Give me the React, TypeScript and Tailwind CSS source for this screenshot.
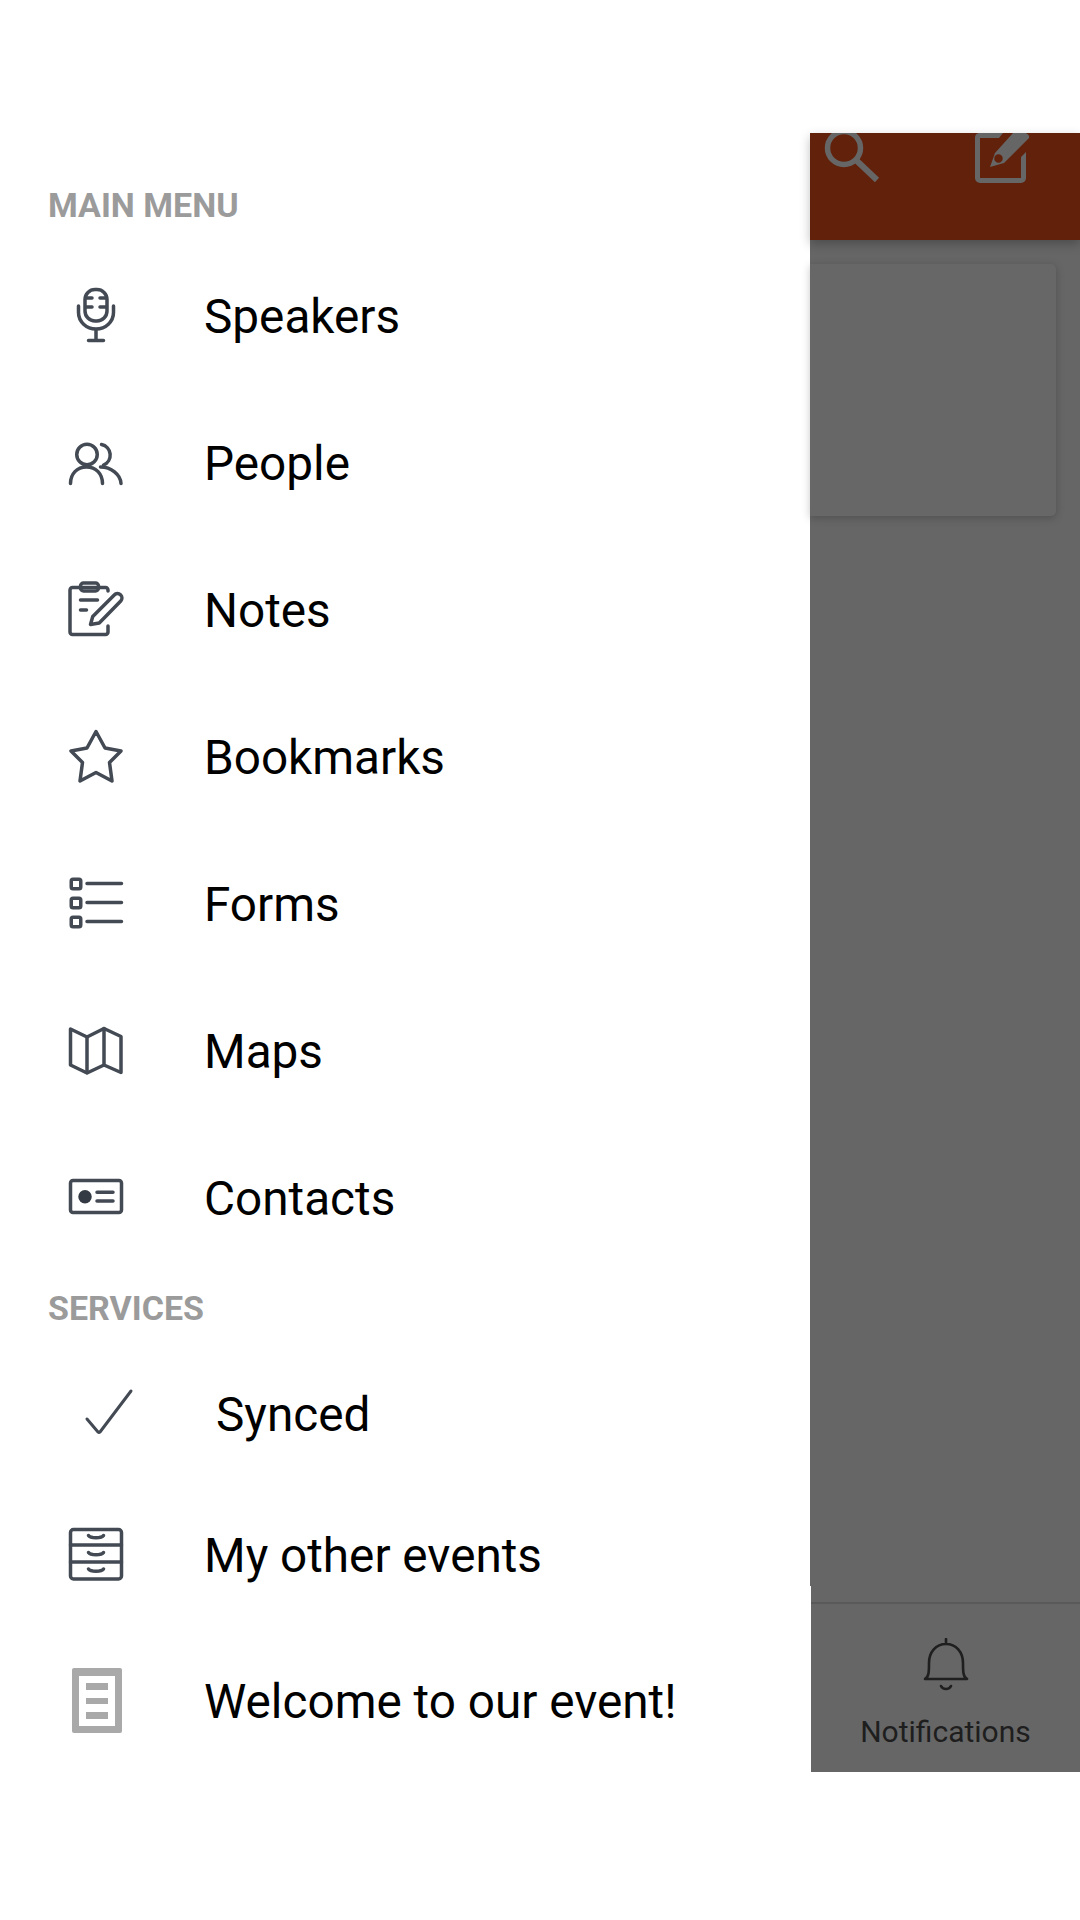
import type { ReactNode } from 'react'

const stroke = {
  fill: 'none',
  stroke: '#434a54',
  strokeWidth: 1.4,
  strokeLinecap: 'round' as const,
  strokeLinejoin: 'round' as const,
}

function Icon({ children }: { children: ReactNode }) {
  return (
    <svg viewBox="0 0 24 24" className="w-[60px] h-[60px]" {...stroke}>
      {children}
    </svg>
  )
}

const MicIcon = () => (
  <Icon>
    <rect x="7.6" y="1.4" width="8.8" height="12.6" rx="4" />
    <path d="M8 4.8h2.4M13.6 4.8H16M8 8.4h2.4M13.6 8.4H16" />
    <path d="M5 8v2.6a7 6.6 0 0 0 14 0V8" />
    <path d="M12 17.4v4.4M9 21.8h6" />
  </Icon>
)

const PeopleIcon = () => (
  <Icon>
    <circle cx="8.4" cy="8.6" r="4.1" />
    <path d="M1.8 20.2c0-3.9 2.6-6.6 6.4-6.6s6.4 2.7 6.4 6.6" />
    <path d="M14.2 4.6a4.3 4.3 0 0 1 .8 8.2" />
    <path d="M13.8 13.6c4.2 0 8 3 8.2 6.6" />
  </Icon>
)

const NotesIcon = () => (
  <Icon>
    <path d="M16.8 4.4V4a1 1 0 0 0-1-1H2.6a1 1 0 0 0-1 1v16.8a1 1 0 0 0 1 1h13.2a1 1 0 0 0 1-1v-2.4" />
    <rect x="5.8" y="1.2" width="7.2" height="3.2" rx="1.2" />
    <path d="M5.8 8h6.8M5.8 12h2.4" />
    <path d="M9.8 17.8l.9-3.2 8.6-8.6a1.7 1.7 0 0 1 2.6 2.4l-8.6 8.8z" />
  </Icon>
)

const StarIcon = () => (
  <Icon>
    <path d="M12 1.8l3.6 6.6 6.4 1.2-4.6 4.6 1 7.4-6.4-3.4-6.4 3.4 1-7.4L2 9.6l6.4-1.2z" />
  </Icon>
)

const FormsIcon = () => (
  <Icon>
    <rect x="2.1" y="2.1" width="3.8" height="3.8" rx=".7" />
    <rect x="2.1" y="9.7" width="3.8" height="3.8" rx=".7" />
    <rect x="2.1" y="17.3" width="3.8" height="3.8" rx=".7" />
    <path d="M8.4 3.8h13.8M8.4 11.4h13.8M8.4 19h13.8" />
  </Icon>
)

const MapIcon = () => (
  <Icon>
    <path d="M1.8 3.2l6.6 3.2 6.8-3.4 6.8 3.2v14.4l-6.8-3-6.8 3.2-6.6-3.2z" />
    <path d="M8.4 6.4v14.2M15.2 3v14.6" />
  </Icon>
)

const ContactIcon = () => (
  <Icon>
    <rect x="1.8" y="5" width="20.4" height="12.8" rx="1" />
    <circle cx="7.6" cy="11.5" r="2.7" fill="#343a44" stroke="none" />
    <path d="M12.4 9.7h6.4M12.4 13.2h6.4" />
  </Icon>
)

const DrawersIcon = () => (
  <Icon>
    <rect x="1.8" y="1.8" width="20.4" height="19.8" rx="1.2" />
    <path d="M1.8 8h20.4M1.8 14.8h20.4" />
    <path d="M9 4.2c.8 1.2 5.2 1.2 6 0M9 11c.8 1.2 5.2 1.2 6 0M9 17.6c.8 1.2 5.2 1.2 6 0" />
  </Icon>
)

function CheckIcon() {
  return (
    <svg viewBox="0 0 50 50" className="w-[50px] h-[50px]" fill="none" stroke="#434a54" strokeWidth="3" strokeLinecap="round" strokeLinejoin="round">
      <path d="M3 31l11 13q1 1 2 0L47 3" />
    </svg>
  )
}

function PageIcon() {
  return (
    <svg viewBox="0 0 50 66" className="w-[50px] h-[66px]">
      <rect width="50" height="65" rx="2" fill="#a9a9a9" />
      <rect x="7" y="8" width="36" height="50" fill="#ffffff" />
      <path d="M14 15h22v7H14zM14 30h22v6H14zM14 44h22v7H14z" fill="#a9a9a9" />
    </svg>
  )
}

function SectionLabel({ children }: { children: string }) {
  return (
    <p className="h-[42px] pl-12 text-[34px] leading-[42px] font-bold text-[#9b9b9b]">
      {children}
    </p>
  )
}

function MenuRow({ icon, label, height = 'h-[147px]' }: { icon: ReactNode; label: string; height?: string }) {
  return (
    <div className={`flex items-center pl-[66px] ${height}`}>
      <div className="w-[138px] flex">{icon}</div>
      <span className="pt-[4px] text-[47.7px] leading-none text-black">{label}</span>
    </div>
  )
}

const mainMenu = [
  { label: 'Speakers', icon: <MicIcon /> },
  { label: 'People', icon: <PeopleIcon /> },
  { label: 'Notes', icon: <NotesIcon /> },
  { label: 'Bookmarks', icon: <StarIcon /> },
  { label: 'Forms', icon: <FormsIcon /> },
  { label: 'Maps', icon: <MapIcon /> },
  { label: 'Contacts', icon: <ContactIcon /> },
]

export default function App() {
  return (
    <div className="flex w-[1080px] h-[1920px] bg-white overflow-hidden font-['Roboto',sans-serif]">
      {/* drawer */}
      <aside className="w-[810px] shrink-0 pt-[184px]">
        <SectionLabel>MAIN MENU</SectionLabel>
        <div className="mt-[16px]">
          {mainMenu.map(item => (
            <MenuRow key={item.label} icon={item.icon} label={item.label} />
          ))}
        </div>
        <div className="mt-[16px]">
          <SectionLabel>SERVICES</SectionLabel>
        </div>
        <div className="mt-[15px] flex items-center pl-[84px] h-[138px]">
          <div className="w-[132px] flex"><CheckIcon /></div>
          <span className="pt-[6px] text-[47.7px] leading-none text-black">Synced</span>
        </div>
        <MenuRow icon={<DrawersIcon />} label="My other events" height="h-[146px]" />
        <div className="flex items-center pl-[72px] h-[146px]">
          <div className="w-[132px] flex"><PageIcon /></div>
          <span className="pt-[4px] text-[47.7px] leading-none text-black">Welcome to our event!</span>
        </div>
      </aside>

      {/* page dimmed behind the drawer */}
      <main className="flex-1 pt-[133px] pb-[148px] flex flex-col">
        <div className="flex-1 flex flex-col bg-[#666666]">
          <header className="relative h-[107px] bg-[#62210a] shadow-[0_4px_10px_rgba(0,0,0,0.25)] flex overflow-hidden">
            <svg viewBox="0 0 60 60" className="ml-[12px] w-[60px] h-[60px] -mt-[10px] shrink-0" fill="none" stroke="#666666" strokeWidth="5.5">
              <circle cx="22" cy="25" r="16.5" />
              <path d="M35 38l20 19" strokeWidth="6" />
            </svg>
            <svg viewBox="0 0 64 64" className="ml-[88px] w-[64px] h-[64px] -mt-[10px] shrink-0" fill="#666666">
              <path d="M9 10h24l-4 5H10v40h41V34l5-5v26a5 5 0 0 1-5 5H10a5 5 0 0 1-5-5V15a5 5 0 0 1 4-5z" />
              <path d="M20 44l5-14L43 10h13q4 2 3 5L34 40zM25.5 32.5a4 4 0 1 0 6 6 4 4 0 1 0-6-6z" fillRule="evenodd" />
            </svg>
          </header>
          <div className="mt-[24px] mr-[24px] h-[252px] rounded-r-[5px] bg-[#676767] shadow-[0_2px_8px_rgba(0,0,0,0.22)]" />
          <div className="flex-1" />
        </div>
        <div className="ml-px h-[186px] shrink-0 pt-[16px] bg-[#666666]">
          <nav className="h-[170px] border-t-[2px] border-[#595959] flex flex-col items-center pt-[34px]">
            <svg viewBox="0 0 46 54" className="w-[46px] h-[54px]" fill="none" stroke="#1f1f1f" strokeWidth="2.6" strokeLinecap="round" strokeLinejoin="round">
              <path d="M23 1v5M2 41c4-2 4-8 4-16 0-11 7-19 17-19s17 8 17 19c0 8 0 14 4 16z" />
              <path d="M18 48c2 4 8 4 10 0" />
            </svg>
            <span className="mt-[23px] text-[30px] leading-[34px] text-[#1e1e1e]">Notifications</span>
          </nav>
        </div>
      </main>
    </div>
  )
}
